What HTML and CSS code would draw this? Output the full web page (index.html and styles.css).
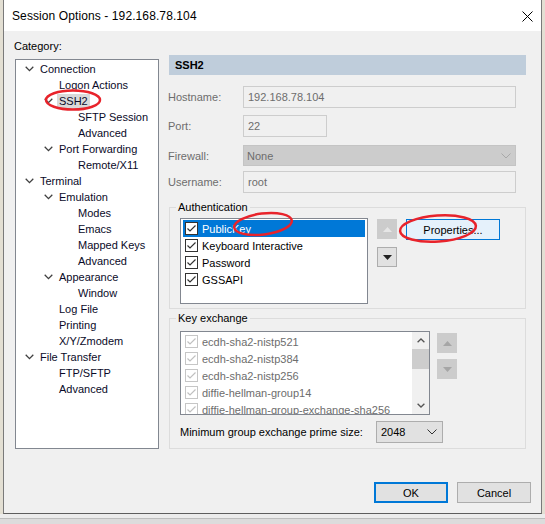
FILE: index.html
```html
<!DOCTYPE html>
<html>
<head>
<meta charset="utf-8">
<title>Session Options</title>
<link rel="stylesheet" href="styles.css">
</head>
<body>
<div class="win">
  <div class="titlebar">
    <span class="title">Session Options - 192.168.78.104</span>
    <svg class="close" width="11" height="11" viewBox="0 0 11 11"><path d="M0.5 0.5 L10.5 10.5 M10.5 0.5 L0.5 10.5" stroke="#000" stroke-width="1" fill="none"/></svg>
  </div>
  <div class="wbody">
    <div class="main">
      <div class="leftcol">
        <div class="cat">Category:</div>
        <div class="tree">
          <div class="ti l0"><span class="slot"><svg width="9" height="6" viewBox="0 0 9 6"><path d="M0.7 0.8 L4.5 4.6 L8.3 0.8" stroke="#404040" stroke-width="1.3" fill="none"/></svg></span>Connection</div>
          <div class="ti l1"><span class="slot"></span>Logon Actions</div>
          <div class="ti l1"><span class="slot"><svg width="9" height="6" viewBox="0 0 9 6"><path d="M0.7 0.8 L4.5 4.6 L8.3 0.8" stroke="#404040" stroke-width="1.3" fill="none"/></svg></span><span class="selitem">SSH2</span></div>
          <div class="ti l2"><span class="slot"></span>SFTP Session</div>
          <div class="ti l2"><span class="slot"></span>Advanced</div>
          <div class="ti l1"><span class="slot"><svg width="9" height="6" viewBox="0 0 9 6"><path d="M0.7 0.8 L4.5 4.6 L8.3 0.8" stroke="#404040" stroke-width="1.3" fill="none"/></svg></span>Port Forwarding</div>
          <div class="ti l2"><span class="slot"></span>Remote/X11</div>
          <div class="ti l0"><span class="slot"><svg width="9" height="6" viewBox="0 0 9 6"><path d="M0.7 0.8 L4.5 4.6 L8.3 0.8" stroke="#404040" stroke-width="1.3" fill="none"/></svg></span>Terminal</div>
          <div class="ti l1"><span class="slot"><svg width="9" height="6" viewBox="0 0 9 6"><path d="M0.7 0.8 L4.5 4.6 L8.3 0.8" stroke="#404040" stroke-width="1.3" fill="none"/></svg></span>Emulation</div>
          <div class="ti l2"><span class="slot"></span>Modes</div>
          <div class="ti l2"><span class="slot"></span>Emacs</div>
          <div class="ti l2"><span class="slot"></span>Mapped Keys</div>
          <div class="ti l2"><span class="slot"></span>Advanced</div>
          <div class="ti l1"><span class="slot"><svg width="9" height="6" viewBox="0 0 9 6"><path d="M0.7 0.8 L4.5 4.6 L8.3 0.8" stroke="#404040" stroke-width="1.3" fill="none"/></svg></span>Appearance</div>
          <div class="ti l2"><span class="slot"></span>Window</div>
          <div class="ti l1"><span class="slot"></span>Log File</div>
          <div class="ti l1"><span class="slot"></span>Printing</div>
          <div class="ti l1"><span class="slot"></span>X/Y/Zmodem</div>
          <div class="ti l0"><span class="slot"><svg width="9" height="6" viewBox="0 0 9 6"><path d="M0.7 0.8 L4.5 4.6 L8.3 0.8" stroke="#404040" stroke-width="1.3" fill="none"/></svg></span>File Transfer</div>
          <div class="ti l1"><span class="slot"></span>FTP/SFTP</div>
          <div class="ti l1"><span class="slot"></span>Advanced</div>
        </div>
      </div>
      <div class="rightcol">
        <div class="hdr">SSH2</div>
        <div class="frow r-host"><span class="lbl">Hostname:</span><div class="edit wide">192.168.78.104</div></div>
        <div class="frow r-port"><span class="lbl">Port:</span><div class="edit port">22</div></div>
        <div class="frow r-fw"><span class="lbl">Firewall:</span><div class="fsel wide"><span>None</span><svg width="10" height="6" viewBox="0 0 10 6"><path d="M0.5 0.5 L5 5 L9.5 0.5" stroke="#a8a8a8" stroke-width="1" fill="none"/></svg></div></div>
        <div class="frow r-user"><span class="lbl">Username:</span><div class="edit wide">root</div></div>

        <div class="group g-auth">
          <span class="legend">Authentication</span>
          <div class="grow">
            <div class="listbox auth">
              <div class="lrow hl"><svg class="cb" width="13" height="13" viewBox="0 0 13 13"><rect x="0.5" y="0.5" width="12" height="12" fill="#fff" stroke="#333"/><path d="M2.5 6.5 L5 9 L10.5 3.5" stroke="#333" stroke-width="1.2" fill="none"/></svg><span>PublicKey</span></div>
              <div class="lrow"><svg class="cb" width="13" height="13" viewBox="0 0 13 13"><rect x="0.5" y="0.5" width="12" height="12" fill="#fff" stroke="#333"/><path d="M2.5 6.5 L5 9 L10.5 3.5" stroke="#333" stroke-width="1.2" fill="none"/></svg><span>Keyboard Interactive</span></div>
              <div class="lrow"><svg class="cb" width="13" height="13" viewBox="0 0 13 13"><rect x="0.5" y="0.5" width="12" height="12" fill="#fff" stroke="#333"/><path d="M2.5 6.5 L5 9 L10.5 3.5" stroke="#333" stroke-width="1.2" fill="none"/></svg><span>Password</span></div>
              <div class="lrow"><svg class="cb" width="13" height="13" viewBox="0 0 13 13"><rect x="0.5" y="0.5" width="12" height="12" fill="#fff" stroke="#333"/><path d="M2.5 6.5 L5 9 L10.5 3.5" stroke="#333" stroke-width="1.2" fill="none"/></svg><span>GSSAPI</span></div>
            </div>
            <div class="arrows">
              <div class="abtn dis"><svg width="9" height="5" viewBox="0 0 9 5"><polygon points="0,5 4.5,0 9,5" fill="#e6e6e6"/></svg></div>
              <div class="abtn en"><svg width="9" height="5" viewBox="0 0 9 5"><polygon points="0,0 9,0 4.5,5" fill="#222"/></svg></div>
            </div>
            <div class="btn props">Properties...</div>
          </div>
        </div>

        <div class="group g-kex">
          <span class="legend">Key exchange</span>
          <div class="kgrow">
            <div class="listbox kex">
              <div class="krows">
                <div class="lrow dim"><svg class="cb" width="13" height="13" viewBox="0 0 13 13"><rect x="0.5" y="0.5" width="12" height="12" fill="#fff" stroke="#c6c6c6"/><path d="M2.5 6.5 L5 9 L10.5 3.5" stroke="#c0c0c0" stroke-width="1.2" fill="none"/></svg><span>ecdh-sha2-nistp521</span></div>
                <div class="lrow dim"><svg class="cb" width="13" height="13" viewBox="0 0 13 13"><rect x="0.5" y="0.5" width="12" height="12" fill="#fff" stroke="#c6c6c6"/><path d="M2.5 6.5 L5 9 L10.5 3.5" stroke="#c0c0c0" stroke-width="1.2" fill="none"/></svg><span>ecdh-sha2-nistp384</span></div>
                <div class="lrow dim"><svg class="cb" width="13" height="13" viewBox="0 0 13 13"><rect x="0.5" y="0.5" width="12" height="12" fill="#fff" stroke="#c6c6c6"/><path d="M2.5 6.5 L5 9 L10.5 3.5" stroke="#c0c0c0" stroke-width="1.2" fill="none"/></svg><span>ecdh-sha2-nistp256</span></div>
                <div class="lrow dim"><svg class="cb" width="13" height="13" viewBox="0 0 13 13"><rect x="0.5" y="0.5" width="12" height="12" fill="#fff" stroke="#c6c6c6"/><path d="M2.5 6.5 L5 9 L10.5 3.5" stroke="#c0c0c0" stroke-width="1.2" fill="none"/></svg><span>diffie-hellman-group14</span></div>
                <div class="lrow dim"><svg class="cb" width="13" height="13" viewBox="0 0 13 13"><rect x="0.5" y="0.5" width="12" height="12" fill="#fff" stroke="#c6c6c6"/><path d="M2.5 6.5 L5 9 L10.5 3.5" stroke="#c0c0c0" stroke-width="1.2" fill="none"/></svg><span>diffie-hellman-group-exchange-sha256</span></div>
              </div>
              <div class="sbar">
                <div class="sarrow"><svg width="8" height="5" viewBox="0 0 8 5"><path d="M0.6 4.3 L4 1 L7.4 4.3" stroke="#555" stroke-width="1.3" fill="none"/></svg></div>
                <div class="thumb"></div>
                <div class="strack"></div>
                <div class="sarrow"><svg width="8" height="5" viewBox="0 0 8 5"><path d="M0.6 0.7 L4 4 L7.4 0.7" stroke="#555" stroke-width="1.3" fill="none"/></svg></div>
              </div>
            </div>
            <div class="arrows k">
              <div class="abtn dis"><svg width="9" height="5" viewBox="0 0 9 5"><polygon points="0,5 4.5,0 9,5" fill="#a6a6a6"/></svg></div>
              <div class="abtn dis"><svg width="9" height="5" viewBox="0 0 9 5"><polygon points="0,0 9,0 4.5,5" fill="#a6a6a6"/></svg></div>
            </div>
          </div>
          <div class="minrow">
            <span class="minlbl">Minimum group exchange prime size:</span>
            <div class="combo"><span>2048</span><svg width="10" height="6" viewBox="0 0 10 6"><path d="M0.5 0.5 L5 5 L9.5 0.5" stroke="#333" stroke-width="1" fill="none"/></svg></div>
          </div>
        </div>
      </div>
    </div>
    <div class="footer">
      <div class="btn ok">OK</div>
      <div class="btn">Cancel</div>
    </div>
  </div>
</div>
<div class="strip"></div>
<svg class="marks" width="545" height="524" viewBox="0 0 545 524">
  <ellipse cx="73" cy="100" rx="27" ry="9.5" fill="none" stroke="#e8232b" stroke-width="2.5"/>
  <ellipse cx="263" cy="224" rx="29" ry="10.5" fill="none" stroke="#e8232b" stroke-width="2.5" transform="rotate(-7 263 224)"/>
  <ellipse cx="438" cy="228.5" rx="38" ry="13" fill="none" stroke="#e8232b" stroke-width="2.5" transform="rotate(-4 438 228.5)"/>
</svg>
</body>
</html>
```

FILE: styles.css
```css
html, body {
  margin: 0;
  padding: 0;
}
body {
  width: 545px;
  height: 524px;
  overflow: hidden;
  position: relative;
  background: #e3dfd3;
  font-family: "Liberation Sans", Arial, sans-serif;
  font-size: 11px;
  color: #000;
}
.win {
  margin-left: 3px;
  width: 537px;
  border-left: 1px solid #7a7a7a;
  border-right: 1px solid #7a7a7a;
  border-bottom: 1px solid #5e5e5e;
  background: #f0f0f0;
}
.titlebar {
  height: 31px;
  background: #fff;
  display: flex;
  align-items: center;
  padding-left: 8px;
}
.title {
  font-size: 12px;
  color: #000;
  letter-spacing: 0.1px;
}
.close {
  margin-left: auto;
  margin-right: 8px;
  margin-top: 1px;
}
.wbody {
  height: 482px;
  display: flex;
  flex-direction: column;
}
.main {
  display: flex;
  padding: 8px 0 0 10px;
}
.leftcol {
  width: 145px;
}
.cat {
  height: 14px;
  line-height: 14px;
}
.tree {
  margin: 6px 0 0 1px;
  width: 144px;
  height: 390px;
  box-sizing: border-box;
  border: 1px solid #828790;
  background: #fff;
  padding-top: 1px;
}
.ti {
  height: 16px;
  line-height: 16px;
  display: flex;
  align-items: center;
  white-space: nowrap;
  color: #0a0a28;
}
.ti.l0 { padding-left: 8px; }
.ti.l1 { padding-left: 27px; }
.ti.l2 { padding-left: 46px; }
.slot {
  width: 16px;
  height: 16px;
  flex: none;
  display: flex;
  align-items: center;
}
.slot svg {
  margin-left: 1px;
  margin-top: -1px;
}
.selitem {
  background: #d9d9d9;
  padding: 0 2px;
  margin-left: -2px;
  line-height: 15px;
}
.rightcol {
  margin-left: 9px;
  margin-top: 16px;
  width: 358px;
}
.hdr {
  margin-left: 1px;
  width: 357px;
  height: 20px;
  box-sizing: border-box;
  background: #bfcddb;
  font-weight: bold;
  line-height: 20px;
  padding-left: 6px;
}
.frow {
  display: flex;
  align-items: center;
}
.lbl {
  width: 75px;
  flex: none;
  color: #6d6d6d;
}
.r-host { margin-top: 11px; }
.r-port { margin-top: 7px; }
.r-fw { margin-top: 8px; }
.r-user { margin-top: 5px; }
.edit {
  box-sizing: border-box;
  height: 22px;
  border: 1px solid #cdcdcd;
  background: #f0f0f0;
  color: #6d6d6d;
  padding-left: 4px;
  line-height: 20px;
}
.wide { width: 273px; }
.port { width: 84px; }
.fsel {
  box-sizing: border-box;
  height: 21px;
  border: 1px solid #c4c4c4;
  background: #cccccc;
  color: #6d6d6d;
  padding: 0 4px 0 3px;
  display: flex;
  align-items: center;
  justify-content: space-between;
}
.group {
  margin-left: 1px;
  width: 357px;
  box-sizing: border-box;
  border: 1px solid #dcdcdc;
}
.g-auth {
  height: 102px;
  margin-top: 14px;
}
.g-kex {
  height: 131px;
  margin-top: 9px;
}
.legend {
  display: block;
  width: fit-content;
  margin: -8px 0 0 6px;
  padding: 0 2px;
  background: #f0f0f0;
  line-height: 14px;
}
.grow {
  display: flex;
  align-items: flex-start;
  margin: 4px 0 0 10px;
}
.listbox {
  box-sizing: border-box;
  border: 1px solid #828790;
  background: #fff;
}
.listbox.auth {
  width: 188px;
  height: 86px;
  padding: 1px 2px;
}
.lrow {
  height: 17px;
  display: flex;
  align-items: center;
  padding-left: 2px;
  white-space: nowrap;
}
.lrow .cb {
  flex: none;
  margin-right: 4px;
}
.lrow.hl {
  background: #0078d7;
  color: #fff;
}
.lrow.dim {
  color: #6d6d6d;
}
.arrows {
  display: flex;
  flex-direction: column;
  gap: 8px;
  margin-left: 9px;
  margin-top: 1px;
}
.abtn {
  width: 20px;
  height: 20px;
  box-sizing: border-box;
  display: flex;
  align-items: center;
  justify-content: center;
}
.abtn.dis {
  background: #cccccc;
}
.abtn.en {
  background: #e1e1e1;
  border: 1px solid #adadad;
}
.btn {
  width: 74px;
  height: 21px;
  box-sizing: border-box;
  border: 1px solid #adadad;
  background: #e1e1e1;
  display: flex;
  align-items: center;
  justify-content: center;
}
.btn.props {
  width: 94px;
  margin-left: 9px;
  margin-top: 1px;
  background: #e5f1fb;
  border-color: #0078d7;
}
.btn.ok {
  border: 2px solid #0078d7;
}
.kgrow {
  display: flex;
  align-items: flex-start;
  margin: 6px 0 0 10px;
}
.listbox.kex {
  width: 250px;
  height: 84px;
  display: flex;
  overflow: hidden;
}
.krows {
  flex: 1;
  padding: 1px 2px 0 2px;
  overflow: hidden;
}
.sbar {
  width: 17px;
  flex: none;
  background: #f0f0f0;
  display: flex;
  flex-direction: column;
}
.sarrow {
  height: 17px;
  display: flex;
  align-items: center;
  justify-content: center;
  flex: none;
}
.thumb {
  height: 20px;
  background: #cdcdcd;
  flex: none;
}
.strack {
  flex: 1;
}
.arrows.k {
  gap: 6px;
  margin-left: 7px;
  margin-top: 2px;
}
.minrow {
  display: flex;
  align-items: center;
  margin: 6px 0 0 10px;
}
.minlbl {
  width: 196px;
  flex: none;
  white-space: nowrap;
}
.combo {
  box-sizing: border-box;
  width: 67px;
  height: 22px;
  border: 1px solid #adadad;
  background: #e1e1e1;
  display: flex;
  align-items: center;
  justify-content: space-between;
  padding: 0 5px 0 4px;
}
.footer {
  display: flex;
  justify-content: flex-end;
  gap: 9px;
  margin-top: 33px;
  padding-right: 10px;
}
.strip {
  height: 10px;
  background: linear-gradient(to bottom, #ececec 0, #ececec 4px, #bdbdbd 4px, #bdbdbd 5px, #dcdcdc 5px, #dcdcdc 10px);
}
.marks {
  position: absolute;
  left: 0;
  top: 0;
  pointer-events: none;
}
```
